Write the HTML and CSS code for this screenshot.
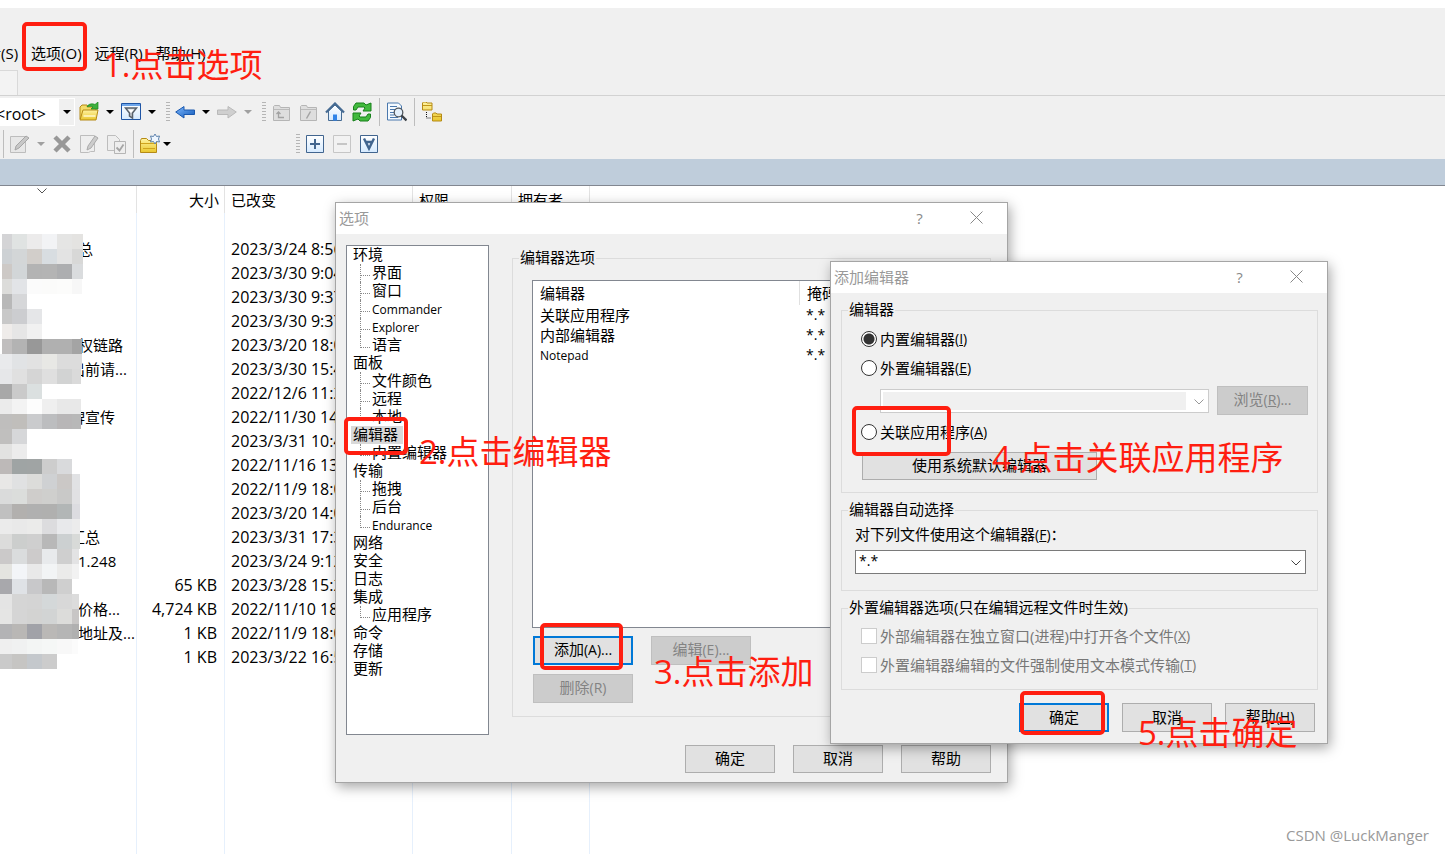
FILE: index.html
```html
<!DOCTYPE html>
<html lang="zh-CN">
<head>
<meta charset="utf-8">
<title>选项</title>
<link rel="stylesheet" href="styles.css">
</head>
<body>
<svg width="0" height="0" class="defs" aria-hidden="true">
  <defs>
    <linearGradient id="gold" x1="0" y1="0" x2="0" y2="1"><stop offset="0" stop-color="#fff3a0"/><stop offset="1" stop-color="#e9c62c"/></linearGradient>
    <linearGradient id="blue" x1="0" y1="0" x2="1" y2="1"><stop offset="0" stop-color="#7db8ff"/><stop offset="1" stop-color="#1159b8"/></linearGradient>
    <linearGradient id="sky" x1="0" y1="0" x2="0" y2="1"><stop offset="0" stop-color="#ffffff"/><stop offset="1" stop-color="#d5eaff"/></linearGradient>
    <symbol id="caret" viewBox="0 0 8 4"><path d="M0 0h8L4 4z" fill="currentColor"/></symbol>
    <symbol id="chev" viewBox="0 0 10 6"><path d="M.5 .5L5 5L9.500 .5" fill="none" stroke="currentColor"/></symbol>
    <symbol id="close" viewBox="0 0 13 13"><path d="M.5 .5l12 12M12.500 .5l-12 12" fill="none" stroke="currentColor"/></symbol>
  </defs>
</svg>

<header class="top">
  <nav class="menu">
    <button>话(S)</button><button>选项(O)</button><button>远程(R)</button><button>帮助(H)</button>
  </nav>
  <div class="tabs"><span class="tab"></span></div>
</header>

<div class="bars">
  <div class="bar">
    <div class="drive"><span class="drive-text">&lt;root&gt;</span><button class="drive-btn" aria-label="目录"><svg class="caret"><use href="#caret"/></svg></button></div>
    <button aria-label="打开目录"><svg class="ic" viewBox="0 0 20 20"><path d="M1 17V5l2-2h5l1 2h8v3" fill="#f4dc68" stroke="#b58a16"/><path d="M1 18l3-10h15l-2 10z" fill="url(#gold)" stroke="#b58a16"/><path d="M4.500 14h12" stroke="#fff9cf" stroke-width="1.500"/><path d="M8 5c1-3 5-4 8-2.500L19 0v7h-7l2-2c-2-1-4-1-6 0z" fill="#3db03d" stroke="#18871c" stroke-width=".7"/></svg></button>
    <button aria-label="打开目录菜单"><svg class="caret"><use href="#caret"/></svg></button>
    <button aria-label="过滤"><svg class="ic" viewBox="0 0 20 20"><path d="M.5 1.500h19v16H.5z" fill="url(#sky)" stroke="#1f55a5"/><path d="M1 2h18v2H1z" fill="#6ea6ea"/><path d="M4.500 6h11l-4 5v5l-3-2v-3z" fill="#ccd0d5" stroke="#58616b" stroke-width="1.500"/><path d="M7 7.500h6L10 11z" fill="#fff"/></svg></button>
    <button aria-label="过滤菜单"><svg class="caret"><use href="#caret"/></svg></button>
    <span class="grip"></span>
    <button aria-label="后退"><svg class="ic" viewBox="0 0 20 20"><path d="M.7 10L9 4.500V8h10.500v4.500H9V16z" fill="url(#blue)" stroke="#1b58ae"/></svg></button>
    <button aria-label="后退菜单"><svg class="caret"><use href="#caret"/></svg></button>
    <button disabled aria-label="前进"><svg class="ic" viewBox="0 0 20 20"><path d="M19.300 10L11 4.500V8H.5v4.500H11V16z" fill="#cfcfcf" stroke="#b9b9b9"/></svg></button>
    <button disabled aria-label="前进菜单"><svg class="caret"><use href="#caret"/></svg></button>
    <span class="grip"></span>
    <button disabled aria-label="上级目录"><svg class="ic" viewBox="0 0 20 20"><path d="M2.500 18.500v-14l1-1h5l1 2h9v13z" fill="#dedede" stroke="#b5b5b5"/><path d="M3 7.500h15" stroke="#bbb"/><path d="M7.500 10v5.500H13M5.500 12l2-2 2 2" fill="none" stroke="#a2a2a2" stroke-width="1.300"/></svg></button>
    <button disabled aria-label="根目录"><svg class="ic" viewBox="0 0 20 20"><path d="M2.500 18.500v-14l1-1h5l1 2h9v13z" fill="#dedede" stroke="#b5b5b5"/><path d="M3 7.500h15" stroke="#bbb"/><path d="M12.500 9.500l-4 7" stroke="#a2a2a2" stroke-width="1.500"/></svg></button>
    <button aria-label="主目录"><svg class="ic" viewBox="0 0 20 20"><path d="M3.500 9v9.500h13V9L10 3z" fill="url(#sky)" stroke="#466b93"/><path d="M1 10.500L10 1.500l9 9" fill="none" stroke="#466b93" stroke-width="2.200"/><path d="M8 12.500h4v6H8z" fill="#3184e8"/></svg></button>
    <button aria-label="刷新"><svg class="ic" viewBox="0 0 20 20"><path d="M1.500 8V4.500L4 1h8l2 2 5-2v8h-8l2-3-1-1H6L4 8z" fill="#42b93d" stroke="#16801b"/><path d="M18.500 12v3.500L16 19H8l-2-2-5 2v-8h8l-2 3 1 1h6l2-3z" fill="#42b93d" stroke="#16801b"/></svg></button>
    <span class="sep"></span>
    <button aria-label="查找"><svg class="ic" viewBox="0 0 20 20"><path d="M.5 1h11l3 3v14H.5z" fill="#f4faff" stroke="#4a78ad"/><path d="M3 4.500h7M3 7.500h6M3 10.500h4M3 13h4M3 15.500h8" stroke="#4a78ad"/><circle cx="11.500" cy="10.500" r="4.300" fill="#e4f0fb" stroke="#50575e" stroke-width="1.300"/><path d="M14.500 13.500l5 5" stroke="#3c4248" stroke-width="2.400"/></svg></button>
    <span class="sep"></span>
    <button aria-label="同步浏览"><svg class="ic" viewBox="0 0 20 20"><path d="M.5 8V1l1-1H4l1 1h5v7zM10.500 19v-7l1-1H14l1 1h4.500v7z" fill="url(#gold)" stroke="#b58a16"/><path d="M1 3.500h9M11 14.500h8" stroke="#c19518"/><path d="M4.500 10v6H9" fill="none" stroke="#111" stroke-dasharray="1 1"/></svg></button>
  </div>
  <div class="bar bar-second">
    <span class="sep"></span>
    <button disabled aria-label="编辑"><svg class="ic" viewBox="0 0 20 20"><path d="M.5 2.500h15v16H.5z" fill="#e7e7e7" stroke="#bdbdbd"/><path d="M5 16l1-4L16 2l3 2L9 14z" fill="#c7c7c7" stroke="#a5a5a5"/></svg></button>
    <button disabled aria-label="编辑菜单"><svg class="caret"><use href="#caret"/></svg></button>
    <button disabled aria-label="删除文件"><svg class="ic" viewBox="0 0 20 20"><path d="M3 3l14 14M17 3L3 17" stroke="#989898" stroke-width="4.500"/></svg></button>
    <button disabled aria-label="重命名"><svg class="ic" viewBox="0 0 20 20"><path d="M1.500 1.500h14v16h-4l-2 1H1.500z" fill="#eee" stroke="#bdbdbd"/><path d="M8 16l1-4L16 2l3 2-7 10z" fill="#ccc" stroke="#aaa"/></svg></button>
    <button disabled aria-label="属性"><svg class="ic" viewBox="0 0 20 20"><path d="M1.500 1.500h8l4 4v11h-12z" fill="#eee" stroke="#bdbdbd"/><path d="M8.500 7.500h11v12h-11z" fill="#eee" stroke="#b5b5b5"/><path d="M10.500 13.500l3 3 4-6" fill="none" stroke="#a5a5a5" stroke-width="1.800"/></svg></button>
    <span class="sep"></span>
    <button aria-label="新建"><svg class="ic" viewBox="0 0 20 20"><path d="M.5 18.500v-12l1-2h5l2 2h8v12z" fill="url(#gold)" stroke="#b58a16"/><path d="M1 9.500h16M3 14.500h12" stroke="#cfa31d"/><path d="M15 0l1.500 2.500 3-.5-1 3 1 3-3-.5L15 10l-1.500-2.500-3 .5 1-3-1-3 3 .5z" fill="#eef6ff" stroke="#5e83ad"/></svg></button>
    <button class="tight" aria-label="新建菜单"><svg class="caret"><use href="#caret"/></svg></button>
    <span class="grip grip-far"></span>
    <button aria-label="选择"><svg class="ic" viewBox="0 0 20 20"><path d="M1.500 1.500h17v17h-17z" fill="url(#sky)" stroke="#41658f"/><path d="M10 5v10M5 10h10" stroke="#41658f" stroke-width="2"/></svg></button>
    <button disabled aria-label="取消选择"><svg class="ic" viewBox="0 0 20 20"><path d="M1.500 1.500h17v17h-17z" fill="#f2f2f2" stroke="#c6c6c6"/><path d="M5 10h10" stroke="#c6c6c6" stroke-width="2"/></svg></button>
    <button aria-label="全选"><svg class="ic" viewBox="0 0 20 20"><path d="M1.500 1.500h17v17h-17z" fill="url(#sky)" stroke="#41658f"/><path d="M5 4.500l5 10 5-10M6.500 8h7" fill="none" stroke="#41658f" stroke-width="2.400"/></svg></button>
  </div>
</div>
<div class="path"></div>

<main class="files">
  <table>
    <colgroup><col class="c-name"><col class="c-size"><col class="c-date"><col class="c-perm"><col class="c-own"><col></colgroup>
    <thead><tr><th class="sorted"><svg class="chev"><use href="#chev"/></svg></th><th class="size">大小</th><th>已改变</th><th>权限</th><th>拥有者</th><th class="rest"></th></tr></thead>
    <tbody>
      <tr><td></td><td></td><td></td><td></td><td></td><td></td></tr>
      <tr><td class="name">总</td><td></td><td>2023/3/24 8:56</td><td></td><td></td><td></td></tr>
      <tr><td></td><td></td><td>2023/3/30 9:04</td><td></td><td></td><td></td></tr>
      <tr><td></td><td></td><td>2023/3/30 9:37</td><td></td><td></td><td></td></tr>
      <tr><td></td><td></td><td>2023/3/30 9:37</td><td></td><td></td><td></td></tr>
      <tr><td class="name">权链路</td><td></td><td>2023/3/20 18:0</td><td></td><td></td><td></td></tr>
      <tr><td class="name long">出前请...</td><td></td><td>2023/3/30 15:4</td><td></td><td></td><td></td></tr>
      <tr><td></td><td></td><td>2022/12/6 11:2</td><td></td><td></td><td></td></tr>
      <tr><td class="name long">牌宣传</td><td></td><td>2022/11/30 14</td><td></td><td></td><td></td></tr>
      <tr><td></td><td></td><td>2023/3/31 10:4</td><td></td><td></td><td></td></tr>
      <tr><td></td><td></td><td>2022/11/16 13</td><td></td><td></td><td></td></tr>
      <tr><td></td><td></td><td>2022/11/9 18:0</td><td></td><td></td><td></td></tr>
      <tr><td></td><td></td><td>2023/3/20 14:0</td><td></td><td></td><td></td></tr>
      <tr><td class="name long">汇总</td><td></td><td>2023/3/31 17:3</td><td></td><td></td><td></td></tr>
      <tr><td class="name">1.248</td><td></td><td>2023/3/24 9:12</td><td></td><td></td><td></td></tr>
      <tr><td></td><td class="num">65 KB</td><td>2023/3/28 15:2</td><td></td><td></td><td></td></tr>
      <tr><td class="name">价格...</td><td class="num">4,724 KB</td><td>2022/11/10 18</td><td></td><td></td><td></td></tr>
      <tr><td class="name">地址及...</td><td class="num">1 KB</td><td>2022/11/9 18:0</td><td></td><td></td><td></td></tr>
      <tr><td></td><td class="num">1 KB</td><td>2023/3/22 16:5</td><td></td><td></td><td></td></tr>
      <tr class="filler"><td></td><td></td><td></td><td></td><td></td><td></td></tr>
    </tbody>
  </table>
  <svg class="mosaic" width="84" height="436" aria-hidden="true"></svg>
</main>

<section class="win win-options" role="dialog" aria-label="选项">
  <div class="title"><h2>选项</h2><button aria-label="帮助信息">?</button><button aria-label="关闭"><svg class="x"><use href="#close"/></svg></button></div>
  <div class="opt-body">
    <ul class="tree">
      <li><span>环境</span><ul><li>界面</li><li>窗口</li><li><span class="en">Commander</span></li><li><span class="en">Explorer</span></li><li>语言</li></ul></li>
      <li><span>面板</span><ul><li>文件颜色</li><li>远程</li><li>本地</li></ul></li>
      <li><span class="sel">编辑器</span><ul><li>内置编辑器</li></ul></li>
      <li><span>传输</span><ul><li>拖拽</li><li>后台</li><li><span class="en">Endurance</span></li></ul></li>
      <li><span>网络</span></li><li><span>安全</span></li><li><span>日志</span></li>
      <li><span>集成</span><ul><li>应用程序</li></ul></li>
      <li><span>命令</span></li><li><span>存储</span></li><li><span>更新</span></li>
    </ul>
    <fieldset class="editors">
      <legend>编辑器选项</legend>
      <div class="list">
        <table>
          <colgroup><col class="c-editor"><col></colgroup>
          <thead><tr><th>编辑器</th><th>掩码</th></tr></thead>
          <tbody><tr><td>关联应用程序</td><td class="mask">*.*</td></tr><tr><td>内部编辑器</td><td class="mask">*.*</td></tr><tr><td><span class="en">Notepad</span></td><td class="mask">*.*</td></tr></tbody>
        </table>
      </div>
      <div class="actions">
        <button class="btn focus">添加<span class="key">(A)...</span></button><button class="btn" disabled>编辑<span class="key">(E)...</span></button>
        <button class="btn" disabled>删除<span class="key">(R)</span></button>
      </div>
    </fieldset>
  </div>
  <div class="foot foot-options"><button class="btn">确定</button><button class="btn">取消</button><button class="btn">帮助</button></div>
</section>

<section class="win win-add" role="dialog" aria-label="添加编辑器">
  <div class="title"><h2>添加编辑器</h2><button aria-label="帮助信息">?</button><button aria-label="关闭"><svg class="x"><use href="#close"/></svg></button></div>
  <form class="add-body">
    <fieldset>
      <legend>编辑器</legend>
      <div class="group kind">
        <label class="choice"><input type="radio" name="kind" checked>内置编辑器<span class="key">(<u>I</u>)</span></label>
        <label class="choice"><input type="radio" name="kind">外置编辑器<span class="key">(<u>E</u>)</span></label>
        <div class="external">
          <span class="combo off"><select disabled aria-label="外置编辑器路径"><option></option></select><svg class="chev"><use href="#chev"/></svg></span>
          <button type="button" class="btn" disabled>浏览<span class="key">(<u>R</u>)...</span></button>
        </div>
        <label class="choice"><input type="radio" name="kind">关联应用程序<span class="key">(<u>A</u>)</span></label>
        <button type="button" class="btn system">使用系统默认编辑器</button>
      </div>
    </fieldset>
    <fieldset>
      <legend>编辑器自动选择</legend>
      <div class="group auto">
        <label for="mask">对下列文件使用这个编辑器<span class="key">(<u>F</u>)</span>：</label>
        <span class="combo"><select id="mask"><option>*.*</option></select><svg class="chev"><use href="#chev"/></svg></span>
      </div>
    </fieldset>
    <fieldset disabled>
      <legend>外置编辑器选项(只在编辑远程文件时生效)</legend>
      <div class="group ext">
        <label class="choice dim"><input type="checkbox">外部编辑器在独立窗口(进程)中打开各个文件<span class="key">(<u>X</u>)</span></label>
        <label class="choice dim"><input type="checkbox">外置编辑器编辑的文件强制使用文本模式传输<span class="key">(<u>T</u>)</span></label>
      </div>
    </fieldset>
    <div class="foot foot-add"><button type="button" class="btn focus">确定</button><button type="button" class="btn">取消</button><button type="button" class="btn">帮助<span class="key">(<u>H</u>)</span></button></div>
  </form>
</section>

<div class="mark m1"></div><div class="mark m2"></div><div class="mark m3"></div><div class="mark m4"></div><div class="mark m5"></div>
<p class="note n1">1.点击选项</p>
<p class="note n2">2.点击编辑器</p>
<p class="note n3">3.点击添加</p>
<p class="note n4">4.点击关联应用程序</p>
<p class="note n5">5.点击确定</p>
<p class="credit">CSDN @LuckManger</p>
<script src="mosaic.js"></script>
</body>
</html>
```
FILE: styles.css
```css
* { box-sizing: border-box; }
body {
  margin: 0;
  min-height: 100vh;
  height: 100vh;
  display: flex;
  flex-direction: column;
  position: relative;
  overflow: hidden;
  background: #fff;
  color: #000;
  font: 15px/18px "Open Sans", "Noto Sans CJK SC", sans-serif;
}
.defs { position: absolute; }
button { font: inherit; color: inherit; background: none; border: 0; padding: 0; white-space: nowrap; }
svg { display: block; }
h2, p, ul { margin: 0; padding: 0; }
ul { list-style: none; }
.caret { width: 8px; height: 4px; }
.chev { width: 10px; height: 6px; }
.ic { width: 20px; height: 20px; }
.key { font-size: 14px; }

/* menu and tabs */
.top { background: #f0f0f0; border-top: 8px solid #fff; border-bottom: 1px solid #d2d2d2; }
.menu { display: flex; gap: 13px; height: 62px; padding-top: 28px; margin-left: -14px; }
.menu button { height: 34px; }
.tab { display: block; width: 18px; height: 25px; border: solid #d9d9d9; border-width: 1px 1px 0 0; background: #f3f3f3; }

/* toolbars */
.bars { background: #f0f0f0; }
.bar { display: flex; align-items: center; gap: 7px; height: 32px; }
.bar button:disabled { color: #a0a0a0; }
.bar-second { height: 31px; padding-left: 3px; }
.drive { display: flex; height: 28px; width: 75px; margin-right: -3px; background: #fff; border: 1px solid #fff; border-left: 0; }
.drive-text { width: 59px; padding-top: 6px; text-indent: -4px; font-size: 16px; }
.drive-btn { flex: 1; background: #f0f0f0; display: grid; place-items: center; }
.grip { width: 4px; height: 20px; margin: 0 -2px 0 3px; background: repeating-linear-gradient(#b5b5b5 0 1px, transparent 1px 3px); }
.grip-far { margin-left: 118px; }
.sep { width: 1px; height: 28px; background: #bdbdbd; }
.bar-second .sep { margin-right: -1px; }
.tight { margin-left: -4px; }
.path { height: 27px; background: #bfcddb; border-bottom: 1px solid #828790; }

/* file list */
.files { flex: 1; min-height: 0; position: relative; }
.files table { width: 100%; height: 100%; table-layout: fixed; border-collapse: separate; border-spacing: 0; }
.c-name { width: 137px; }
.c-size { width: 88px; }
.c-date { width: 188px; }
.c-perm { width: 99px; }
.c-own { width: 78px; }
.files th { height: 27px; padding: 0 6px; font-weight: 400; text-align: left; border-right: 1px solid #e3e3e3; }
.files td { height: 24px; padding: 0 6px; border-right: 1px solid #e6f0fc; font-size: 16px; white-space: nowrap; }
.files th:last-child, .files td:last-child { border-right: 0; }
.files .filler td { height: auto; }
.files .num { text-align: right; padding-right: 7px; }
.files .size { text-align: right; padding-right: 5px; }
.files .name { padding: 0 0 0 78px; font-size: 15px; }
.files .long { padding-left: 70px; }
.files .sorted { vertical-align: top; padding: 2px 0 0 37px; color: #555; }
.mosaic { position: absolute; left: 0; top: 48px; }

/* windows */
.win { position: absolute; line-height: 16px; background: #f0f0f0; border: 1px solid #a5a5a5; box-shadow: 2px 4px 12px rgba(0, 0, 0, .35); display: flex; flex-direction: column; }
.win-options { left: 335px; top: 202px; width: 673px; }
.win-add { left: 830px; top: 261px; width: 498px; }
.title { display: flex; align-items: center; height: 31px; padding: 0 3px 2px; background: #fff; color: #999; }
.title h2 { flex: 1; font-size: 15px; font-weight: 400; }
.title button { width: 57px; display: grid; place-items: center; color: #888; }
.title button:last-child { margin-right: -1px; }
.x { width: 13px; height: 13px; }
fieldset { margin: 0; padding: 0; min-width: 0; border: 1px solid #dcdcdc; }
legend { margin-left: 6px; padding: 0 1px; height: 18px; }
.btn { height: 29px; min-width: 90px; padding-bottom: 2px; background: #e1e1e1; border: 1px solid #adadad; }
.btn:disabled { background: #ccc; border-color: #bfbfbf; color: #838383; }
.btn.focus { border: 2px solid #0078d7; }

.opt-body { display: flex; align-items: flex-start; gap: 23px; padding: 11px 16px 0 10px; }
.tree { width: 143px; height: 490px; background: #fff; border: 1px solid #828790; }
.tree > li > span { display: inline-block; height: 18px; padding: 0 2px; margin-left: 4px; vertical-align: top; }
.tree .sel { background: #d9d9d9; padding-right: 5px; }
.tree ul { padding-left: 13px; }
.tree ul li { position: relative; height: 18px; padding-left: 12px; }
.tree ul li::before { content: ""; position: absolute; left: 0; top: 0; width: 9px; height: 11px; border: dotted #888; border-width: 0 0 1px 1px; }
.tree ul li:not(:last-child)::after { content: ""; position: absolute; left: 0; top: 11px; height: 7px; border-left: 1px dotted #888; }
.en { font-size: 12px; }

.editors { flex: 1; margin-top: 4px; padding: 0 19px 13px; }
.editors legend { margin-left: -13px; }
.list { margin-top: 13px; height: 348px; background: #fff; border: 1px solid #828790; }
.list table { width: 100%; table-layout: fixed; border-spacing: 0; }
.c-editor { width: 267px; }
.list th, .list td { padding: 0 7px 1px; text-align: left; font-weight: 400; height: 20px; }
.list th { height: 24px; }
.list th:first-child { border-right: 1px solid #e0e0e0; }
.list .mask { padding-left: 6px; font-size: 14px; }
.actions { display: grid; grid-template-columns: 100px 100px; gap: 9px 18px; margin: 8px 1px 0; }
.foot { display: flex; justify-content: flex-end; }
.foot-options { gap: 18px; padding: 10px 16px 9px; }
.foot-options .btn { height: 28px; }

.add-body { padding: 8px 9px 11px 10px; display: flex; flex-direction: column; gap: 8px; }
.group { display: flex; flex-direction: column; align-items: flex-start; }
.choice { display: flex; align-items: center; height: 18px; white-space: nowrap; }
.choice input { appearance: none; width: 16px; height: 16px; margin: 0 3px 0 0; background: #fff; border: 1px solid #333; }
.choice input[type=radio] { border-radius: 50%; }
.choice input:checked { background: radial-gradient(circle, #333 0 5px, #fff 6px); }
.dim { color: #777; }
.dim input { border-color: #ccc; }
.kind { padding: 11px 9px 12px 19px; }
.kind .choice + .choice { margin-top: 11px; }
.external { align-self: stretch; display: flex; align-items: center; gap: 8px; margin: 9px 0 8px 19px; }
.external .btn { width: 91px; }
.system { width: 235px; height: 28px; margin: 11px 0 0 1px; }
.combo { flex: 1; position: relative; display: block; }
.combo select { appearance: none; display: block; width: 100%; height: 24px; padding: 0 3px 2px; font: inherit; font-size: 14px; color: #000; background: #fff; border: 1px solid #7a7a7a; border-radius: 0; }
.combo .chev { position: absolute; right: 5px; top: 10px; color: #444; }
.combo.off select { border-color: #ccc; opacity: 1; box-shadow: inset 0 0 0 2px #fff; background: linear-gradient(to left, #fff 22px, #f0f0f0 22px); }
.combo.off .chev { color: #999; }
.auto { padding: 7px 11px 16px 13px; }
.auto .combo { align-self: stretch; margin-top: 7px; }
.ext { padding: 10px 9px 15px 19px; gap: 11px; }
.foot-add { gap: 13px; padding: 5px 3px 0; }

/* annotations */
.mark { position: absolute; border: 4px solid #ff1e10; border-radius: 5px; }
.m1 { left: 22px; top: 22px; width: 65px; height: 49px; }
.m2 { left: 344px; top: 417px; width: 64px; height: 38px; }
.m3 { left: 540px; top: 623px; width: 83px; height: 47px; }
.m4 { left: 852px; top: 406px; width: 99px; height: 50px; }
.m5 { left: 1020px; top: 691px; width: 85px; height: 44px; }
.note { position: absolute; font-size: 33px; line-height: 40px; color: #ff1e10; white-space: nowrap; }
.n1 { left: 103px; top: 45px; }
.n2 { left: 419px; top: 432px; }
.n3 { left: 654px; top: 652px; }
.n4 { left: 992px; top: 438px; }
.n5 { left: 1138px; top: 713px; }
.credit { position: absolute; right: 16px; bottom: 10px; font-size: 15px; color: #999; }
```
FILE: mosaic.js
```js
// Pixel blocks that hide the private part of the file names, one string per 15px row.
const rows = [
  "d4d4d6 e0e3e2 ecebeb f2f3f5 e5e5e4 e4e3e1", "cdd1d4 d3d6d7 d2ceca d8dde1 e3e3e3 d8d8d7",
  "cdc9c6 d2d6d8 b3b3b3 b4b4b4 adaeb0 dadcde", "dcdcda e2e4e7 fbfbfb fbfbfa fcfcfb f7f7f7",
  "b8b8b8 d6d7d9", "c8c8c8 cccdd0 e5e6e8", "efecea e6e6e6 f1f1f1",
  "c0bebe b3b3b3 989898 b0b0b0 b0b0b0 a4a4a4", "e9eaec e1e3e5 e2e2e2 e8e8e5 dcdcdc dcdcdc",
  "e6e7e9 e0e0e0 d5d5d5 dfdfdf d2d3d3 dadada", "a8a8a8 cacaca dbe0e0",
  "ebebeb f3f3f3 fdfdfd efefef e8e8e8 e8e8e8", "bfbebd c0bebb cacbcd bcbdbf b8b6b7 b8b8b8",
  "c0bfbe d6d7d9", "e2e2e1 ececec", "bdb9b8 9fa4a4 a0a4a4 cdcdcd d9dadc",
  "e8e7e6 e0e1e2 dcdcda cfd1d3 cbc8c6 e1e2e4", "dadbdb dbdddb cfcdcb cfcfcd c9c9c8 e1e1e3",
  "c0c0c0 b2b0ae b0b0b0 b0b0af b2b6b6 dcdce0", "ebebeb e9e9e9 ebebea dcdcde e8e9eb ececec",
  "dcdcdb cccecd cfcfcf b8b8b8 ccd0d1 d8dad8", "cbc9c9 dadcdd cdcbcb e8eaec cfcfcf e3e3e4",
  "e4e4e0 f3f5f8 e9e9e9 f2f4f5 ebebea f2f2f2", "a8a8ac dfe2e6 c8c8ca b8b8b8 cfcfcf",
  "e4e4e4 d5d5d5 d4d4d4 d4d8d9 d8d8d8 dcdcdc", "e5e5e4 d5d5d5 d3d3d2 d2d4d4 dcdcda c8c6c5",
  "b3b3b5 b9b7b5 a1a2a8 bab8b6 b5b5b5 b0b0b0", "efefef f0f1f1 f3f5f4 f5f7f6 f8f8f8 fbfbfb",
  "cacaca c6c5c3 c4c8cc cccccc"
];
const mosaic = document.querySelector(".mosaic");
rows.forEach((row, r) => {
  const edge = 83 - Math.round(r / 6);
  row.split(" ").forEach((color, c) => {
    const x = c ? c * 15 - 3 : (r < 8 ? 2 : 0);
    const end = Math.min(c * 15 + 12, edge);
    const rect = document.createElementNS("http://www.w3.org/2000/svg", "rect");
    rect.setAttribute("x", x);
    rect.setAttribute("y", r * 15);
    rect.setAttribute("width", end - x);
    rect.setAttribute("height", 15);
    rect.setAttribute("fill", "#" + color);
    mosaic.append(rect);
  });
});
```
